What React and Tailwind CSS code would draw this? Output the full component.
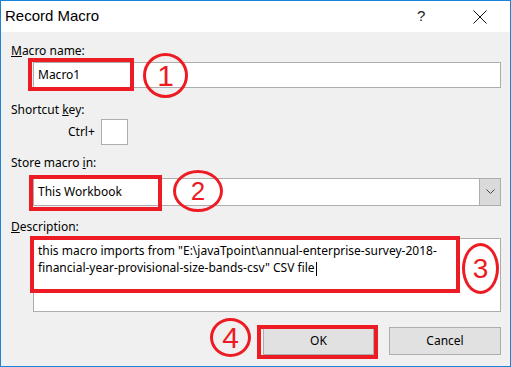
import React from "react";

const F = { fontFamily: '"Noto Sans", "Liberation Sans", sans-serif' };

function Label({ children }) {
  return <div className="text-[12px] leading-[16px] text-black">{children}</div>;
}

export default function App() {
  return (
    <div
      className="relative w-[511px] h-[367px] border border-[#1883d7] bg-[#f0f0f0] flex flex-col overflow-hidden"
      style={F}
    >
      {/* Title bar */}
      <div className="h-[31px] bg-white flex items-center shrink-0">
        <div className="pl-[4px] text-[15px] text-black flex-1" style={{ fontFamily: '"Liberation Sans", sans-serif' }}>
          Record Macro
        </div>
        <div className="text-[15px] text-[#222] w-[10px] mr-[46px]" style={{ fontFamily: '"Liberation Sans", sans-serif' }}>?</div>
        <svg width="14" height="14" viewBox="0 0 14 14" className="mr-[23px]">
          <path d="M0.5 0.5 L13.5 13.5 M13.5 0.5 L0.5 13.5" stroke="#111" strokeWidth="1" fill="none" />
        </svg>
      </div>

      {/* Body */}
      <div className="flex-1 flex flex-col pl-[10px] pr-[9px]">
        <div className="mt-[11px]">
          <Label><span className="underline">M</span>acro name:</Label>
        </div>
        <div className="mt-[3px] ml-[22px] h-[26px] bg-white border border-[#adadad] flex items-center pl-[4px] text-[12px]">
          Macro1
        </div>

        <div className="mt-[14px]">
          <Label>Shortcut <span className="underline">k</span>ey:</Label>
        </div>
        <div className="mt-[1px] pl-[57px] flex items-center gap-[6px]">
          <span className="text-[12px]">Ctrl+</span>
          <div className="w-[27px] h-[26px] bg-white border border-[#adadad]" />
        </div>

        <div className="mt-[10px]">
          <Label>Store macro <span className="underline">i</span>n:</Label>
        </div>
        <div className="mt-[7px] ml-[22px] h-[28px] bg-white border border-[#adadad] flex items-center">
          <div className="flex-1 pl-[4px] text-[12px]">This Workbook</div>
          <div className="w-[21px] h-full bg-[#dadada] border-l border-[#adadad] flex items-center justify-center">
            <svg width="9" height="6" viewBox="0 0 9 6">
              <path d="M0.5 0.5 L4.5 4.5 L8.5 0.5" stroke="#444" strokeWidth="1" fill="none" />
            </svg>
          </div>
        </div>

        <div className="mt-[13px]">
          <Label><span className="underline">D</span>escription:</Label>
        </div>
        <div className="mt-[3px] ml-[22px] h-[74px] bg-white border border-[#adadad] pl-[4px] pt-[3px] text-[12px] leading-[17px]">
          <div>this macro imports from "E:\javaTpoint\annual-enterprise-survey-2018-</div>
          <div>
            financial-year-provisional-size-bands-csv" CSV file
            <span className="inline-block w-[1px] h-[14px] bg-black align-middle ml-[1px]" />
          </div>
        </div>

        <div className="mt-[15px] flex justify-end gap-[15px]">
          <div className="w-[111px] h-[28px] bg-[#e1e1e1] border border-[#adadad] flex items-center justify-center text-[12px]">OK</div>
          <div className="w-[112px] h-[28px] bg-[#e1e1e1] border border-[#adadad] flex items-center justify-center text-[12px]">Cancel</div>
        </div>
      </div>

      {/* Annotations overlay */}
      <div className="absolute left-[27px] top-[57px] w-[106px] h-[33px] border-[4px] border-[#ed1c24]" />
      <div className="absolute left-[28px] top-[174px] w-[133px] h-[36px] border-[4px] border-[#ed1c24]" />
      <div className="absolute left-[29px] top-[235px] w-[430px] h-[57px] border-[4px] border-[#ed1c24]" />
      <div className="absolute left-[256px] top-[324px] w-[121px] h-[34px] border-[4px] border-[#ed1c24]" />

      <div className="absolute left-[142px] top-[52px] w-[45px] h-[45px] rounded-full border-[3px] border-[#ed1c24] flex items-center justify-center text-[#ed1c24] text-[30px] leading-none" style={{ fontFamily: '"Liberation Sans", sans-serif' }}>1</div>
      <div className="absolute left-[172px] top-[169px] w-[50px] h-[42px] rounded-[50%] border-[3px] border-[#ed1c24] flex items-center justify-center text-[#ed1c24] text-[26px] leading-none" style={{ fontFamily: '"Liberation Sans", sans-serif' }}>2</div>
      <div className="absolute left-[461px] top-[242px] w-[37px] h-[51px] rounded-[50%] border-[3px] border-[#ed1c24] flex items-center justify-center text-[#ed1c24] text-[28px] leading-none" style={{ fontFamily: '"Liberation Sans", sans-serif' }}>3</div>
      <div className="absolute left-[209px] top-[317px] w-[41px] h-[39px] rounded-[50%] border-[3px] border-[#ed1c24] flex items-center justify-center text-[#ed1c24] text-[30px] leading-none" style={{ fontFamily: '"Liberation Sans", sans-serif' }}>4</div>
    </div>
  );
}
